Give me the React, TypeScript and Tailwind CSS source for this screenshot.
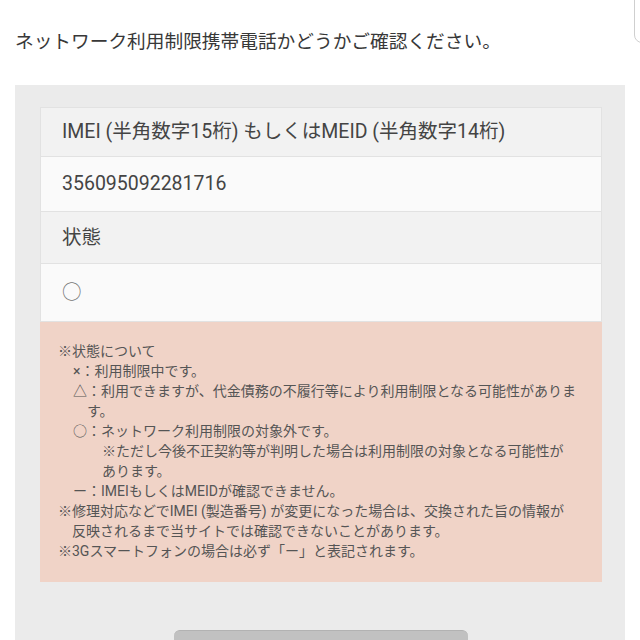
export default function App() {
  return (
    <div className="relative w-[640px] h-[640px] overflow-hidden bg-white text-[#333] font-['Roboto','Noto_Sans_CJK_JP',sans-serif]">
      {/* top-right overlay edge */}
      <div className="absolute right-[-20px] top-[-10px] w-[26px] h-[53px] rounded-bl-[8px] border border-[#cfcfcf] bg-white" />

      {/* Title */}
      <div className="pl-[15px] pt-[29px] h-[85px] text-[18.7px] leading-[26px] text-[#383838]">
        ネットワーク利用制限携帯電話かどうかご確認ください。
      </div>

      {/* Gray panel */}
      <div className="ml-[15px] w-[610px] bg-[#ebebeb] pt-[22px] pl-[25px] pr-[23px] pb-[40px]">
        <div className="border border-[#e2e2e2] text-[19.5px] text-[#444]">
          <div className="h-[49px] flex items-center pl-[21px] bg-[#f2f2f2] border-b border-[#e2e2e2]">
            IMEI (半角数字15桁) もしくはMEID (半角数字14桁)
          </div>
          <div className="h-[55px] flex items-center pl-[21px] bg-[#fafafa] border-b border-[#e2e2e2]">
            356095092281716
          </div>
          <div className="h-[52px] flex items-center pl-[21px] bg-[#f2f2f2] border-b border-[#e2e2e2]">
            状態
          </div>
          <div className="h-[57px] flex items-center pl-[21px] bg-[#fafafa] text-[#777]">
            ○
          </div>
        </div>

        {/* Notes */}
        <div className="bg-[#f0d3c7] pt-[19px] pb-[21px] pl-[18px] text-[14px] leading-[20px] text-[#555] whitespace-nowrap">
          <p>※状態について</p>
          <div className="pl-[15px]">
            <p>×：利用制限中です。</p>
            <p>
              △：利用できますが、代金債務の不履行等により利用制限となる可能性がありま
              <br />
              <span className="pl-[14px]">す。</span>
            </p>
            <p>○：ネットワーク利用制限の対象外です。</p>
            <p className="pl-[29px]">
              ※ただし今後不正契約等が判明した場合は利用制限の対象となる可能性が
              <br />
              あります。
            </p>
            <p>ー：IMEIもしくはMEIDが確認できません。</p>
          </div>
          <p>
            ※修理対応などでIMEI (製造番号) が変更になった場合は、交換された旨の情報が
            <br />
            <span className="pl-[14px]">反映されるまで当サイトでは確認できないことがあります。</span>
          </p>
          <p>※3Gスマートフォンの場合は必ず「ー」と表記されます。</p>
        </div>

        {/* Button */}
        <div className="flex justify-center pt-[48px]">
          <button className="w-[294px] h-[44px] rounded-[6px] bg-[#c1c1c1] border-t border-[#b2b2b2]" />
        </div>
      </div>
    </div>
  );
}
